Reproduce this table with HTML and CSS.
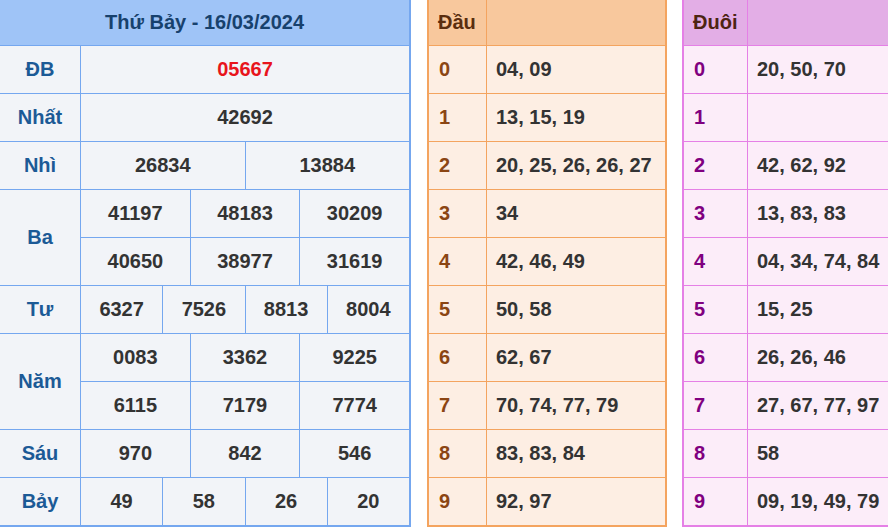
FILE: index.html
```html
<!DOCTYPE html>
<html lang="vi">
<head>
<meta charset="utf-8">
<title>Kết quả xổ số - Thứ Bảy 16/03/2024</title>
<link rel="stylesheet" href="styles.css">
</head>
<body>
<div class="page">
  <div class="card card-blue">
    <div class="title">Thứ Bảy - 16/03/2024</div>

    <div class="lbl">ĐB</div>
    <div class="num red span12">05667</div>

    <div class="lbl">Nhất</div>
    <div class="num span12">42692</div>

    <div class="lbl">Nhì</div>
    <div class="num span6">26834</div>
    <div class="num span6">13884</div>

    <div class="lbl rows2">Ba</div>
    <div class="num span4">41197</div>
    <div class="num span4">48183</div>
    <div class="num span4">30209</div>
    <div class="num span4">40650</div>
    <div class="num span4">38977</div>
    <div class="num span4">31619</div>

    <div class="lbl">Tư</div>
    <div class="num span3">6327</div>
    <div class="num span3">7526</div>
    <div class="num span3">8813</div>
    <div class="num span3">8004</div>

    <div class="lbl rows2">Năm</div>
    <div class="num span4">0083</div>
    <div class="num span4">3362</div>
    <div class="num span4">9225</div>
    <div class="num span4">6115</div>
    <div class="num span4">7179</div>
    <div class="num span4">7774</div>

    <div class="lbl">Sáu</div>
    <div class="num span4">970</div>
    <div class="num span4">842</div>
    <div class="num span4">546</div>

    <div class="lbl">Bảy</div>
    <div class="num span3">49</div>
    <div class="num span3">58</div>
    <div class="num span3">26</div>
    <div class="num span3">20</div>
  </div>

  <div class="card card-orange">
    <div class="hd">Đầu</div><div class="hd"></div>
    <div class="key">0</div><div class="val">04, 09</div>
    <div class="key">1</div><div class="val">13, 15, 19</div>
    <div class="key">2</div><div class="val">20, 25, 26, 26, 27</div>
    <div class="key">3</div><div class="val">34</div>
    <div class="key">4</div><div class="val">42, 46, 49</div>
    <div class="key">5</div><div class="val">50, 58</div>
    <div class="key">6</div><div class="val">62, 67</div>
    <div class="key">7</div><div class="val">70, 74, 77, 79</div>
    <div class="key">8</div><div class="val">83, 83, 84</div>
    <div class="key">9</div><div class="val">92, 97</div>
  </div>

  <div class="card card-purple">
    <div class="hd">Đuôi</div><div class="hd"></div>
    <div class="key">0</div><div class="val">20, 50, 70</div>
    <div class="key">1</div><div class="val"></div>
    <div class="key">2</div><div class="val">42, 62, 92</div>
    <div class="key">3</div><div class="val">13, 83, 83</div>
    <div class="key">4</div><div class="val">04, 34, 74, 84</div>
    <div class="key">5</div><div class="val">15, 25</div>
    <div class="key">6</div><div class="val">26, 26, 46</div>
    <div class="key">7</div><div class="val">27, 67, 77, 97</div>
    <div class="key">8</div><div class="val">58</div>
    <div class="key">9</div><div class="val">09, 19, 49, 79</div>
  </div>
</div>
</body>
</html>
```

FILE: styles.css
```css
html, body {
  margin: 0;
  padding: 0;
  background: #ffffff;
  overflow: hidden;
}

body {
  font-family: "Liberation Sans", Arial, sans-serif;
  font-weight: bold;
  font-size: 20px;
  color: #333333;
}

.page {
  display: flex;
  align-items: flex-start;
  gap: 16px;
  margin-top: -2px;
  margin-left: -2px;
  width: 1000px;
}

.card {
  display: grid;
  gap: 1px;
  border: 2px solid;
  grid-template-rows: 45px repeat(10, 47px);
  flex: none;
}

.card > div {
  display: flex;
  align-items: center;
  white-space: nowrap;
}

/* Blue results card */
.card-blue {
  border-color: #75a7ef;
  background: #75a7ef;
  grid-template-columns: 80px repeat(12, 1fr);
  width: 409px;
}

.card-blue .title {
  grid-column: 1 / -1;
  justify-content: center;
  background: #9fc4f7;
  color: #17416d;
}

.card-blue .lbl {
  justify-content: center;
  background: #f2f4f8;
  color: #1c5a96;
}

.card-blue .lbl.rows2 {
  grid-row: span 2;
}

.card-blue .num {
  justify-content: center;
  background: #f2f4f8;
  color: #333333;
}

.card-blue .red { color: #e8141c; }

.span12 { grid-column: span 12; }
.span6 { grid-column: span 6; }
.span4 { grid-column: span 4; }
.span3 { grid-column: span 3; }

/* Orange head card */
.card-orange {
  border-color: #f4a45f;
  background: #f4a45f;
  grid-template-columns: 57px 178px;
}

.card-orange .hd {
  background: #f8c89d;
  color: #5a2d0e;
  padding: 0 9px;
}

.card-orange .key {
  background: #fdeee3;
  color: #8b4513;
  padding: 0 10px;
}

.card-orange .val {
  background: #fdeee3;
  color: #333333;
  padding: 0 9px;
}

/* Purple tail card */
.card-purple {
  border-color: #e580e6;
  background: #e580e6;
  grid-template-columns: 63px 200px;
  margin-left: -1px;
}

.card-purple .hd {
  background: #e3aee6;
  color: #4d2412;
  padding: 0 9px;
}

.card-purple .key {
  background: #fcedf9;
  color: #800080;
  padding: 0 10px;
}

.card-purple .val {
  background: #fcedf9;
  color: #333333;
  padding: 0 9px;
}
```
